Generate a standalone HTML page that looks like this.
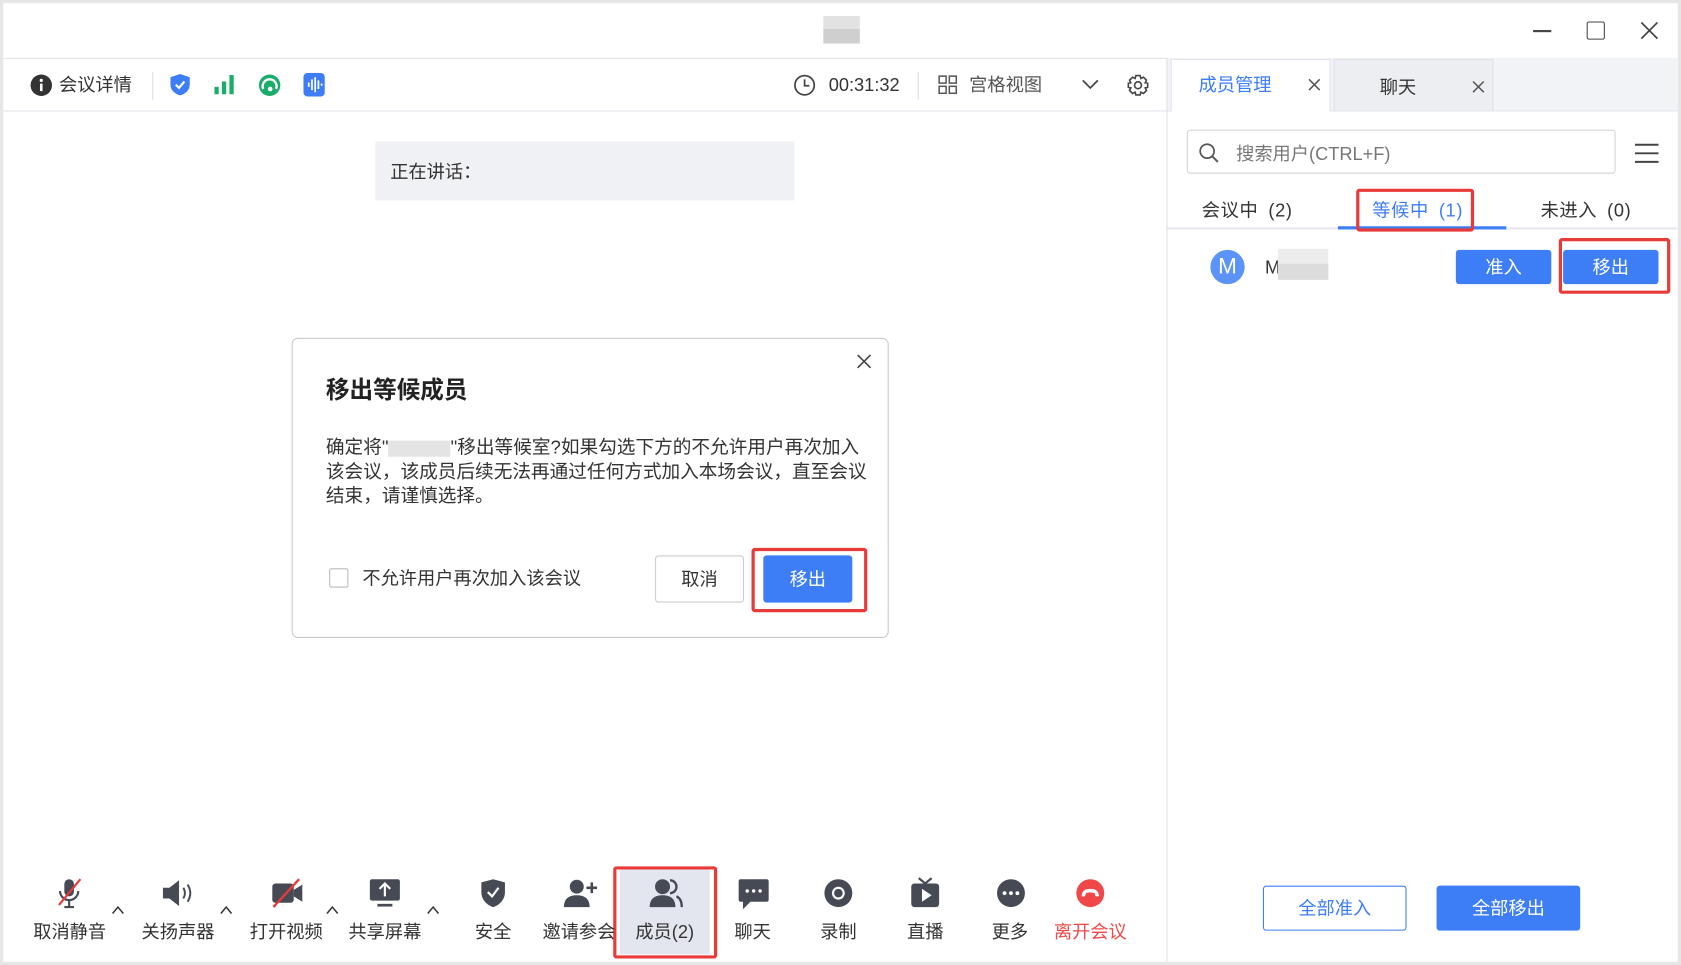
<!DOCTYPE html><html><head><meta charset="utf-8"><style>
*{box-sizing:border-box;margin:0;padding:0}
body{width:1681px;height:965px;overflow:hidden;background:#fff;font-family:"Liberation Sans","Noto Sans CJK SC",sans-serif;color:#333}
#w{position:absolute;left:0;top:0;width:1568px;height:900px;transform:scale(1.07207,1.0722);transform-origin:0 0;background:#e6e6e6}
.a{position:absolute}
.win{left:3px;top:3px;width:1562px;height:894px;background:#fff}
.t{position:absolute;white-space:nowrap;font-size:17px;line-height:20px}
.btn{position:absolute;border-radius:3px;text-align:center;font-size:17px}
.lab{position:absolute;top:855px;font-size:17px;width:90px;text-align:center;margin-left:-45px;white-space:nowrap}
.ic{position:absolute;top:818px}
.car{position:absolute;top:845px}
</style></head><body><div id="w">
<div class="a win"></div>
<div class="a" style="left:768px;top:15px;width:34px;height:26px;background:#e2e2e2"></div>
<div class="a" style="left:768px;top:27px;width:34px;height:13px;background:#cfcfcf"></div>
<div class="a" style="left:1430px;top:28px;width:17px;height:1.5px;background:#444"></div>
<div class="a" style="left:1480px;top:20px;width:17px;height:17px;border:1.5px solid #444;border-radius:2px"></div>
<svg class="a" style="left:1530px;top:20px" width="17" height="17"><path d="M1 1L16 16M16 1L1 16" stroke="#444" stroke-width="1.6"/></svg>
<div class="a" style="left:3px;top:54px;width:1086px;height:1px;background:#e4e4ec"></div>
<div class="a" style="left:3px;top:103px;width:1086px;height:1px;background:#e4e4ec"></div>
<svg class="a" style="left:28px;top:69px" width="21" height="21"><circle cx="10.5" cy="10.5" r="10" fill="#333"/><rect x="9.3" y="9" width="2.4" height="7" fill="#fff"/><circle cx="10.5" cy="6" r="1.5" fill="#fff"/></svg>
<div class="t" style="left:55px;top:70px">会议详情</div>
<div class="a" style="left:142px;top:67px;width:1px;height:26px;background:#ddd"></div>
<svg class="a" style="left:158px;top:68px" width="20" height="22"><path d="M10 1L19 4V11C19 16 15 19.5 10 21C5 19.5 1 16 1 11V4Z" fill="#3d7ef7"/><path d="M6 11L9 14L14 8" stroke="#fff" stroke-width="2" fill="none"/></svg>
<svg class="a" style="left:200px;top:70px" width="20" height="18"><rect x="0" y="11" width="4" height="7" fill="#1aad6a"/><rect x="7" y="6" width="4" height="12" fill="#1aad6a"/><rect x="14" y="0" width="4" height="18" fill="#1aad6a"/></svg>
<svg class="a" style="left:241px;top:69px" width="21" height="21"><circle cx="10.5" cy="10.5" r="10" fill="#1aad6a"/><path d="M4.5 14A6.5 6.5 0 1 1 16.5 14" stroke="#fff" stroke-width="2.2" fill="none"/><circle cx="11" cy="14" r="2.2" fill="#fff"/></svg>
<svg class="a" style="left:283px;top:68px" width="20" height="22"><rect width="20" height="22" rx="4" fill="#3d7ef7"/><path d="M5 9V13M8 6V16M11 4V18M14 7V15M17 10V12" stroke="#fff" stroke-width="1.6"/></svg>
<svg class="a" style="left:740px;top:69px" width="21" height="21"><circle cx="10.5" cy="10.5" r="9" stroke="#444" stroke-width="1.6" fill="none"/><path d="M10.5 5V11H15" stroke="#444" stroke-width="1.6" fill="none"/></svg>
<div class="t" style="left:773px;top:70px">00:31:32</div>
<div class="a" style="left:856px;top:67px;width:1px;height:26px;background:#ddd"></div>
<svg class="a" style="left:875px;top:70px" width="18" height="18" fill="none" stroke="#555" stroke-width="1.4"><rect x="1" y="1" width="6.5" height="6.5"/><rect x="10.5" y="1" width="6.5" height="6.5"/><rect x="1" y="10.5" width="6.5" height="6.5"/><rect x="10.5" y="10.5" width="6.5" height="6.5"/></svg>
<div class="t" style="left:904px;top:70px;color:#555">宫格视图</div>
<svg class="a" style="left:1009px;top:74px" width="16" height="10"><path d="M1 1L8 8L15 1" stroke="#444" stroke-width="1.6" fill="none"/></svg>
<svg class="a" style="left:1051px;top:69px" width="21" height="21" fill="none" stroke="#444" stroke-width="1.5"><path d="M8.5 1.5H12.5L13.2 4.2L15.6 3L18.4 5.8L17.2 8.2L19.5 8.5V12.5L17.2 13L18.4 15.4L15.6 18.2L13.2 17L12.5 19.5H8.5L7.8 17L5.4 18.2L2.6 15.4L3.8 13L1.5 12.5V8.5L3.8 8.2L2.6 5.8L5.4 3L7.8 4.2Z"/><circle cx="10.5" cy="10.5" r="3.2"/></svg>
<div class="a" style="left:350px;top:132px;width:391px;height:55px;background:#f0f1f4"></div>
<div class="t" style="left:364px;top:151px">正在讲话：</div>
<div class="a" style="left:272px;top:315px;width:557px;height:280px;border:1px solid #c9c9c9;border-radius:6px;background:#fff"></div>
<svg class="a" style="left:799px;top:330px" width="14" height="14"><path d="M1 1L13 13M13 1L1 13" stroke="#444" stroke-width="1.5"/></svg>
<div class="t" style="left:304px;top:351px;font-size:22px;line-height:26px;font-weight:bold;color:#222">移出等候成员</div>
<div class="t" style="left:304px;top:406px;font-size:17.4px;line-height:22.5px;white-space:normal;width:506px;color:#333">确定将"<span style="display:inline-block;width:58px;height:15px;background:#e4e4e4;vertical-align:middle"></span>"移出等候室?如果勾选下方的不允许用户再次加入该会议，该成员后续无法再通过任何方式加入本场会议，直至会议结束，请谨慎选择。</div>
<div class="a" style="left:307px;top:530px;width:18px;height:18px;border:1px solid #bbb;border-radius:2px"></div>
<div class="t" style="left:338px;top:530px">不允许用户再次加入该会议</div>
<div class="btn" style="left:611px;top:518px;width:83px;height:44px;border:1px solid #ccc;line-height:44px">取消</div>
<div class="btn" style="left:712px;top:518px;width:83px;height:44px;background:#3d7ef7;color:#fff;line-height:46px">移出</div>
<div class="a" style="left:701px;top:511px;width:108px;height:60px;border:3px solid #e93a3a;border-radius:3px"></div>
<div class="a" style="left:578px;top:810px;width:84px;height:80px;background:#e3e6ef"></div>
<div class="a" style="left:572px;top:808px;width:97px;height:86px;border:3px solid #e93a3a;border-radius:3px"></div>
<svg class="ic" style="left:52px" width="26" height="30"><rect x="8" y="2" width="9" height="16" rx="4.5" fill="#454a55"/><path d="M4 13A8.5 8.5 0 0 0 21 13M12.5 22V28M8 28H17" stroke="#454a55" stroke-width="2" fill="none"/><path d="M3 26L23 2" stroke="#e93a3a" stroke-width="2"/></svg>
<svg class="ic" style="left:150px" width="34" height="30"><path d="M2 10H8L17 3V27L8 20H2Z" fill="#454a55"/><path d="M21 10Q24 15 21 20M25 7Q30 15 25 23" stroke="#454a55" stroke-width="1.8" fill="none"/></svg>
<svg class="ic" style="left:252px" width="32" height="30"><rect x="2" y="6" width="20" height="18" rx="3" fill="#454a55"/><path d="M22 12L30 7V23L22 18Z" fill="#454a55"/><path d="M3 28L27 2" stroke="#e93a3a" stroke-width="2.2"/></svg>
<svg class="ic" style="left:344px" width="30" height="30"><rect x="1" y="2" width="28" height="20" rx="2" fill="#454a55"/><path d="M15 18V7M10 11L15 6L20 11" stroke="#fff" stroke-width="2" fill="none"/><rect x="8" y="25" width="14" height="2.5" fill="#454a55"/></svg>
<svg class="ic" style="left:447px" width="26" height="30"><path d="M13 2L24 5V14C24 21 19 26 13 28C7 26 2 21 2 14V5Z" fill="#454a55"/><path d="M8 14L12 18L18 10" stroke="#fff" stroke-width="2" fill="none"/></svg>
<svg class="ic" style="left:525px" width="32" height="30"><circle cx="13" cy="9" r="6.5" fill="#454a55"/><path d="M1 28C1 20 6 17 13 17C20 17 25 20 25 28Z" fill="#454a55"/><path d="M27 5V15M22 10H32" stroke="#454a55" stroke-width="2.4"/></svg>
<svg class="ic" style="left:605px" width="32" height="30"><circle cx="13" cy="9" r="7" fill="#454a55"/><path d="M1 28C1 20 6 17 13 17C20 17 25 20 25 28Z" fill="#454a55"/><path d="M20 3A6 6 0 0 1 20 15M26 18C30 20 31 24 31 28" stroke="#454a55" stroke-width="2.2" fill="none"/></svg>
<svg class="ic" style="left:688px" width="30" height="32"><path d="M3 2H27Q29 2 29 4V21Q29 23 27 23H12L5 30V23H3Q1 23 1 21V4Q1 2 3 2Z" fill="#454a55"/><circle cx="9" cy="13" r="1.6" fill="#fff"/><circle cx="15" cy="13" r="1.6" fill="#fff"/><circle cx="21" cy="13" r="1.6" fill="#fff"/></svg>
<svg class="ic" style="left:768px" width="28" height="30"><circle cx="14" cy="15" r="13" fill="#454a55"/><circle cx="14" cy="15" r="5" fill="none" stroke="#fff" stroke-width="2"/></svg>
<svg class="ic" style="left:849px" width="28" height="30"><path d="M8 1L14 6L20 1" stroke="#454a55" stroke-width="2" fill="none"/><rect x="1" y="6" width="26" height="22" rx="3" fill="#454a55"/><path d="M11 11V23L20 17Z" fill="#fff"/></svg>
<svg class="ic" style="left:929px" width="28" height="30"><circle cx="14" cy="15" r="13" fill="#454a55"/><circle cx="8" cy="15" r="1.8" fill="#fff"/><circle cx="14" cy="15" r="1.8" fill="#fff"/><circle cx="20" cy="15" r="1.8" fill="#fff"/></svg>
<svg class="ic" style="left:1003px" width="28" height="30"><circle cx="14" cy="15" r="13" fill="#f04848"/><path d="M6 18Q6 11 14 11Q22 11 22 18L19 18L18 15Q14 13.5 10 15L9 18Z" fill="#fff"/></svg>
<svg class="car" style="left:104px" width="12" height="8"><path d="M1 7L6 1L11 7" stroke="#333" stroke-width="1.4" fill="none"/></svg>
<svg class="car" style="left:205px" width="12" height="8"><path d="M1 7L6 1L11 7" stroke="#333" stroke-width="1.4" fill="none"/></svg>
<svg class="car" style="left:304px" width="12" height="8"><path d="M1 7L6 1L11 7" stroke="#333" stroke-width="1.4" fill="none"/></svg>
<svg class="car" style="left:398px" width="12" height="8"><path d="M1 7L6 1L11 7" stroke="#333" stroke-width="1.4" fill="none"/></svg>
<div class="lab" style="left:65px">取消静音</div><div class="lab" style="left:166px">关扬声器</div><div class="lab" style="left:267px">打开视频</div><div class="lab" style="left:359px">共享屏幕</div><div class="lab" style="left:460px">安全</div><div class="lab" style="left:540px;width:68px;margin-left:-34px;overflow:hidden">邀请参会</div><div class="lab" style="left:620px">成员(2)</div><div class="lab" style="left:702px">聊天</div><div class="lab" style="left:782px">录制</div><div class="lab" style="left:863px">直播</div><div class="lab" style="left:942px">更多</div><div class="lab" style="left:1017px;color:#f04848">离开会议</div>
<div class="a" style="left:1088px;top:54px;width:1px;height:843px;background:#e0e0e6"></div>
<div class="a" style="left:1089px;top:54px;width:476px;height:50px;background:#f2f3f6;border-bottom:1px solid #e4e4ec"></div>
<div class="a" style="left:1092px;top:55px;width:149px;height:49px;background:#fff;border:1px solid #e4e4ec;border-bottom:none"></div>
<div class="a" style="left:1244px;top:55px;width:149px;height:48px;background:#eceef2;border:1px solid #e0e0e6;border-bottom:none"></div>
<div class="t" style="left:1118px;top:70px;color:#3d7ef7">成员管理</div>
<svg class="a" style="left:1220px;top:73px" width="12" height="12"><path d="M1 1L11 11M11 1L1 11" stroke="#555" stroke-width="1.4"/></svg>
<div class="t" style="left:1287px;top:72px">聊天</div>
<svg class="a" style="left:1373px;top:75px" width="12" height="12"><path d="M1 1L11 11M11 1L1 11" stroke="#555" stroke-width="1.4"/></svg>
<div class="a" style="left:1107px;top:121px;width:400px;height:41px;border:1px solid #d4d4d8;border-radius:3px"></div>
<svg class="a" style="left:1118px;top:133px" width="20" height="20"><circle cx="8" cy="8" r="6.5" stroke="#555" stroke-width="1.6" fill="none"/><path d="M13 13L18 18" stroke="#555" stroke-width="1.8"/></svg>
<div class="t" style="left:1153px;top:134px;color:#777">搜索用户(CTRL+F)</div>
<svg class="a" style="left:1525px;top:133px" width="22" height="20"><path d="M0 2H22M0 10H22M0 18H22" stroke="#444" stroke-width="1.8"/></svg>
<div class="t" style="left:1121px;top:187px;word-spacing:4px;letter-spacing:0.6px">会议中 (2)</div>
<div class="t" style="left:1280px;top:187px;color:#3d7ef7;word-spacing:4px;letter-spacing:0.6px">等候中 (1)</div>
<div class="t" style="left:1437px;top:187px;word-spacing:4px;letter-spacing:0.6px">未进入 (0)</div>
<div class="a" style="left:1089px;top:212px;width:476px;height:2px;background:#e8e8ee"></div>
<div class="a" style="left:1248px;top:211px;width:157px;height:3px;background:#3d7ef7"></div>
<div class="a" style="left:1265px;top:176px;width:110px;height:40px;border:3px solid #e93a3a;border-radius:3px"></div>
<div class="a" style="left:1129px;top:233px;width:32px;height:32px;border-radius:50%;background:#5b93f8;color:#fff;text-align:center;font-size:21px;line-height:32px">M</div>
<div class="t" style="left:1180px;top:240px">M</div>
<div class="a" style="left:1192px;top:232px;width:47px;height:29px;background:#ececec"></div>
<div class="a" style="left:1192px;top:246px;width:47px;height:15px;background:#dcdcdc"></div>
<div class="btn" style="left:1358px;top:233px;width:89px;height:32px;background:#3d7ef7;color:#fff;line-height:34px">准入</div>
<div class="btn" style="left:1458px;top:233px;width:89px;height:32px;background:#3d7ef7;color:#fff;line-height:34px">移出</div>
<div class="a" style="left:1454px;top:222px;width:104px;height:52px;border:3px solid #e93a3a;border-radius:3px"></div>
<div class="btn" style="left:1178px;top:826px;width:134px;height:42px;border:1px solid #3d7ef7;color:#3d7ef7;line-height:42px">全部准入</div>
<div class="btn" style="left:1340px;top:826px;width:134px;height:42px;background:#3d7ef7;color:#fff;line-height:44px">全部移出</div>
</div></body></html>
